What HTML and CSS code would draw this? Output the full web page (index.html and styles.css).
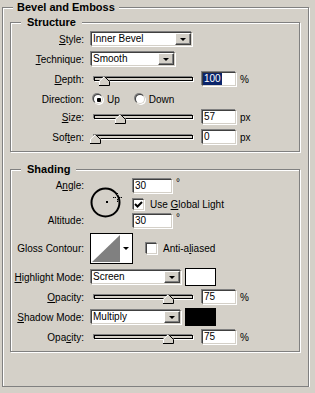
FILE: index.html
```html
<!DOCTYPE html>
<html lang="en">
<head>
    <meta charset="UTF-8">
    <title>Bevel and Emboss</title>
    <link rel="stylesheet" href="styles.css">
</head>
<body>
    <div class="panel">
        <div class="panel-title">Bevel and Emboss</div>

        <div class="group group-structure">
            <div class="group-title">Structure</div>

            <div class="row row-first">
                <span class="lbl"><u>S</u>tyle:</span>
                <div class="select select-style"><span class="select-val">Inner Bevel</span><span class="select-btn"></span></div>
            </div>

            <div class="row">
                <span class="lbl"><u>T</u>echnique:</span>
                <div class="select select-tech"><span class="select-val">Smooth</span><span class="select-btn"></span></div>
            </div>

            <div class="row">
                <span class="lbl"><u>D</u>epth:</span>
                <div class="slider">
                    <svg class="thumb" style="left: 9%" width="11" height="10" viewBox="0 0 11 10"><path d="M0 10V5L5.5 0L11 5V10Z" fill="#d4d0c8"/><path d="M0.5 9.5V5.2L5.5 0.5" stroke="#fff" fill="none"/><path d="M5.5 0.5L10.5 5.5V9.5H0" stroke="#000" fill="none"/></svg>
                </div>
                <div class="field"><span class="hl">100</span></div>
                <span class="unit">%</span>
            </div>

            <div class="row row-dir">
                <span class="lbl">Direction:</span>
                <span class="radio on"></span><span class="opt-text">Up</span>
                <span class="radio radio-down"></span><span class="opt-text">Down</span>
            </div>

            <div class="row row-size">
                <span class="lbl"><u>S</u>ize:</span>
                <div class="slider">
                    <svg class="thumb" style="left: 26%" width="11" height="10" viewBox="0 0 11 10"><path d="M0 10V5L5.5 0L11 5V10Z" fill="#d4d0c8"/><path d="M0.5 9.5V5.2L5.5 0.5" stroke="#fff" fill="none"/><path d="M5.5 0.5L10.5 5.5V9.5H0" stroke="#000" fill="none"/></svg>
                </div>
                <div class="field">57</div>
                <span class="unit">px</span>
            </div>

            <div class="row">
                <span class="lbl">Sof<u>t</u>en:</span>
                <div class="slider">
                    <svg class="thumb" style="left: 0%" width="11" height="10" viewBox="0 0 11 10"><path d="M0 10V5L5.5 0L11 5V10Z" fill="#d4d0c8"/><path d="M0.5 9.5V5.2L5.5 0.5" stroke="#fff" fill="none"/><path d="M5.5 0.5L10.5 5.5V9.5H0" stroke="#000" fill="none"/></svg>
                </div>
                <div class="field">0</div>
                <span class="unit">px</span>
            </div>
        </div>

        <div class="group group-shading">
            <div class="group-title">Shading</div>

            <div class="angle">
                <span class="lbl lbl-angle">A<u>n</u>gle:</span>
                <svg class="dial" width="32" height="31" viewBox="0 0 32 31">
                    <circle cx="15.5" cy="15.5" r="14" stroke="#000" stroke-width="2" fill="none"/>
                    <rect x="16" y="14" width="2" height="2" fill="#000"/>
                    <g fill="#000">
                        <rect x="27" y="6" width="1" height="1"/>
                        <rect x="27" y="8" width="1" height="1"/>
                        <rect x="27" y="12" width="1" height="1"/>
                        <rect x="27" y="14" width="1" height="1"/>
                        <rect x="23" y="10" width="1" height="1"/>
                        <rect x="25" y="10" width="1" height="1"/>
                        <rect x="29" y="10" width="1" height="1"/>
                        <rect x="31" y="10" width="1" height="1"/>
                    </g>
                    <g fill="#808080">
                        <rect x="27" y="7" width="1" height="1"/>
                        <rect x="27" y="13" width="1" height="1"/>
                        <rect x="24" y="10" width="1" height="1"/>
                        <rect x="30" y="10" width="1" height="1"/>
                    </g>
                </svg>
                <div class="angle-val">
                    <div class="field field-angle">30</div>
                    <span class="deg">°</span>
                </div>
                <div class="global">
                    <span class="check">
                        <svg width="9" height="9" viewBox="0 0 9 9"><polyline points="1,4 3.5,6.5 8,2" stroke="#000" stroke-width="2" fill="none"/></svg>
                    </span>
                    <span class="check-text">Use <u>G</u>lobal Light</span>
                </div>
                <span class="lbl lbl-alt">Altitude:</span>
                <div class="alt-val">
                    <div class="field field-angle">30</div>
                    <span class="deg">°</span>
                </div>
            </div>

            <div class="row row-gloss">
                <span class="lbl">Gloss Contour:</span>
                <svg class="contour" width="43" height="31" viewBox="0 0 43 31">
                    <rect x="0.5" y="0.5" width="42" height="30" fill="#fff" stroke="#000"/>
                    <path d="M2 29L30 2V29Z" fill="#808080"/>
                    <path d="M33 14H39L36 17Z" fill="#000"/>
                </svg>
                <span class="check check-anti"></span>
                <span class="check-text">Anti-a<u>l</u>iased</span>
            </div>

            <div class="row row-mode">
                <span class="lbl"><u>H</u>ighlight Mode:</span>
                <div class="select select-mode"><span class="select-val">Screen</span><span class="select-btn"></span></div>
                <span class="swatch"></span>
            </div>

            <div class="row row-op">
                <span class="lbl"><u>O</u>pacity:</span>
                <div class="slider">
                    <svg class="thumb" style="left: 75%" width="11" height="10" viewBox="0 0 11 10"><path d="M0 10V5L5.5 0L11 5V10Z" fill="#d4d0c8"/><path d="M0.5 9.5V5.2L5.5 0.5" stroke="#fff" fill="none"/><path d="M5.5 0.5L10.5 5.5V9.5H0" stroke="#000" fill="none"/></svg>
                </div>
                <div class="field">75</div>
                <span class="unit">%</span>
            </div>

            <div class="row row-mode">
                <span class="lbl"><u>S</u>hadow Mode:</span>
                <div class="select select-mode"><span class="select-val">Multiply</span><span class="select-btn"></span></div>
                <span class="swatch swatch-dark"></span>
            </div>

            <div class="row row-op">
                <span class="lbl">Opa<u>c</u>ity:</span>
                <div class="slider">
                    <svg class="thumb" style="left: 75%" width="11" height="10" viewBox="0 0 11 10"><path d="M0 10V5L5.5 0L11 5V10Z" fill="#d4d0c8"/><path d="M0.5 9.5V5.2L5.5 0.5" stroke="#fff" fill="none"/><path d="M5.5 0.5L10.5 5.5V9.5H0" stroke="#000" fill="none"/></svg>
                </div>
                <div class="field">75</div>
                <span class="unit">%</span>
            </div>
        </div>
    </div>
</body>
</html>
```

FILE: styles.css
```css
body {
    margin: 0;
    background: #d4d0c8;
    font-family: "Liberation Sans", Arial, sans-serif;
    font-size: 10px;
    color: #000;
    overflow: hidden;
}

/* etched frames */
.panel {
    margin: 7px 6px 0 2px;
    padding: 0 8px 34px 7px;
    border: 1px solid #808080;
    box-shadow: 1px 1px 0 #fff, inset 1px 1px 0 #fff;
}

.panel-title {
    display: table;
    margin: -8px 0 0 3px;
    padding: 0 4px;
    background: #d4d0c8;
    font-size: 11px;
    font-weight: bold;
    line-height: 14px;
}

.group {
    margin-top: 8px;
    padding-bottom: 6px;
    border: 1px solid #808080;
    box-shadow: 1px 1px 0 #fff, inset 1px 1px 0 #fff;
}

.group-shading {
    margin-top: 17px;
}

.group-title {
    display: table;
    margin: -8px 0 0 10px;
    padding: 0 6px;
    background: #d4d0c8;
    font-size: 11px;
    font-weight: bold;
    line-height: 14px;
}

/* rows */
.row {
    display: flex;
    align-items: center;
    height: 16px;
    margin-top: 4px;
}

.row-first { margin-top: 2px; }
.row-size { margin-top: 2px; }

.lbl {
    flex: none;
    width: 73px;
    margin-right: 6px;
    text-align: right;
    white-space: nowrap;
}

/* sunken controls */
.select,
.field,
.slider,
.check,
.radio {
    box-sizing: border-box;
    border: 1px solid;
    border-color: #404040 #d4d0c8 #d4d0c8 #404040;
    box-shadow: -1px -1px 0 #808080, 1px 1px 0 #fff;
}

.select {
    display: flex;
    height: 14px;
    margin: 1px;
    background: #fff;
}

.select-style { width: 101px; }
.select-tech { width: 84px; }
.select-mode { width: 90px; }

.select-val {
    flex: 1;
    padding-left: 1px;
    line-height: 12px;
    white-space: nowrap;
}

.select-btn {
    display: flex;
    align-items: center;
    justify-content: center;
    box-sizing: border-box;
    width: 16px;
    height: 12px;
    background: #d4d0c8;
    border: 1px solid;
    border-color: #fff #404040 #404040 #fff;
    box-shadow: inset -1px -1px 0 #808080;
}

.select-btn::after {
    content: '';
    border-left: 3px solid transparent;
    border-right: 3px solid transparent;
    border-top: 3px solid #000;
    margin-top: 1px;
}

.field {
    width: 34px;
    height: 14px;
    margin: 1px;
    padding-left: 1px;
    background: #fff;
    line-height: 12px;
}

.field-angle { width: 39px; }

.hl {
    display: inline-block;
    margin-left: -1px;
    padding: 0 1px;
    background: #0a246a;
    color: #fff;
}

.unit {
    margin-left: 3px;
}

.slider {
    position: relative;
    width: 99px;
    height: 4px;
    margin: 0 8px 0 4px;
    background: #d4d0c8;
    border-color: #000;
}

.thumb {
    position: absolute;
    top: -2px;
    margin-left: -5px;
}

/* radio / check */
.radio {
    position: relative;
    width: 10px;
    height: 10px;
    margin-left: 3px;
    border-radius: 50%;
    background: #fff;
}

.radio.on::after {
    content: '';
    position: absolute;
    left: 3px;
    top: 3px;
    width: 4px;
    height: 4px;
    border-radius: 1px;
    background: #000;
}

.radio-down {
    margin-left: 15px;
}

.opt-text {
    margin-left: 4px;
}

.check {
    display: flex;
    width: 11px;
    height: 11px;
    margin: 1px;
    background: #fff;
}

.check-text {
    margin-left: 5px;
    white-space: nowrap;
}

/* angle block */
.angle {
    display: grid;
    grid-template-columns: 79px 42px 1fr;
    grid-template-rows: 17px 18px 16px;
    margin-top: 2px;
}

.angle .lbl {
    width: auto;
    line-height: 16px;
}

.lbl-angle { grid-column: 1; grid-row: 1; }
.lbl-alt { grid-column: 1; grid-row: 3; }

.dial {
    grid-column: 2;
    grid-row: 1 / 4;
    margin-top: 9px;
}

.angle-val,
.alt-val {
    grid-column: 3;
    display: flex;
    align-items: flex-start;
}

.angle-val { grid-row: 1; }
.alt-val { grid-row: 3; }

.deg {
    margin-left: 3px;
    line-height: 10px;
}

.global {
    grid-column: 3;
    grid-row: 2;
    align-self: center;
    display: flex;
    align-items: center;
}

/* shading rows */
.row-gloss {
    height: 31px;
    margin-top: 4px;
}

.check-anti {
    margin-left: 13px;
}

.row-mode {
    height: 18px;
}

.row-op {
    margin-top: 3px;
}

.row-op + .row-mode {
    margin-top: 3px;
}

.swatch {
    box-sizing: border-box;
    width: 31px;
    height: 18px;
    margin-left: 3px;
    background: #fff;
    border: 1px solid #000;
}

.swatch-dark {
    background: #000;
}
```
